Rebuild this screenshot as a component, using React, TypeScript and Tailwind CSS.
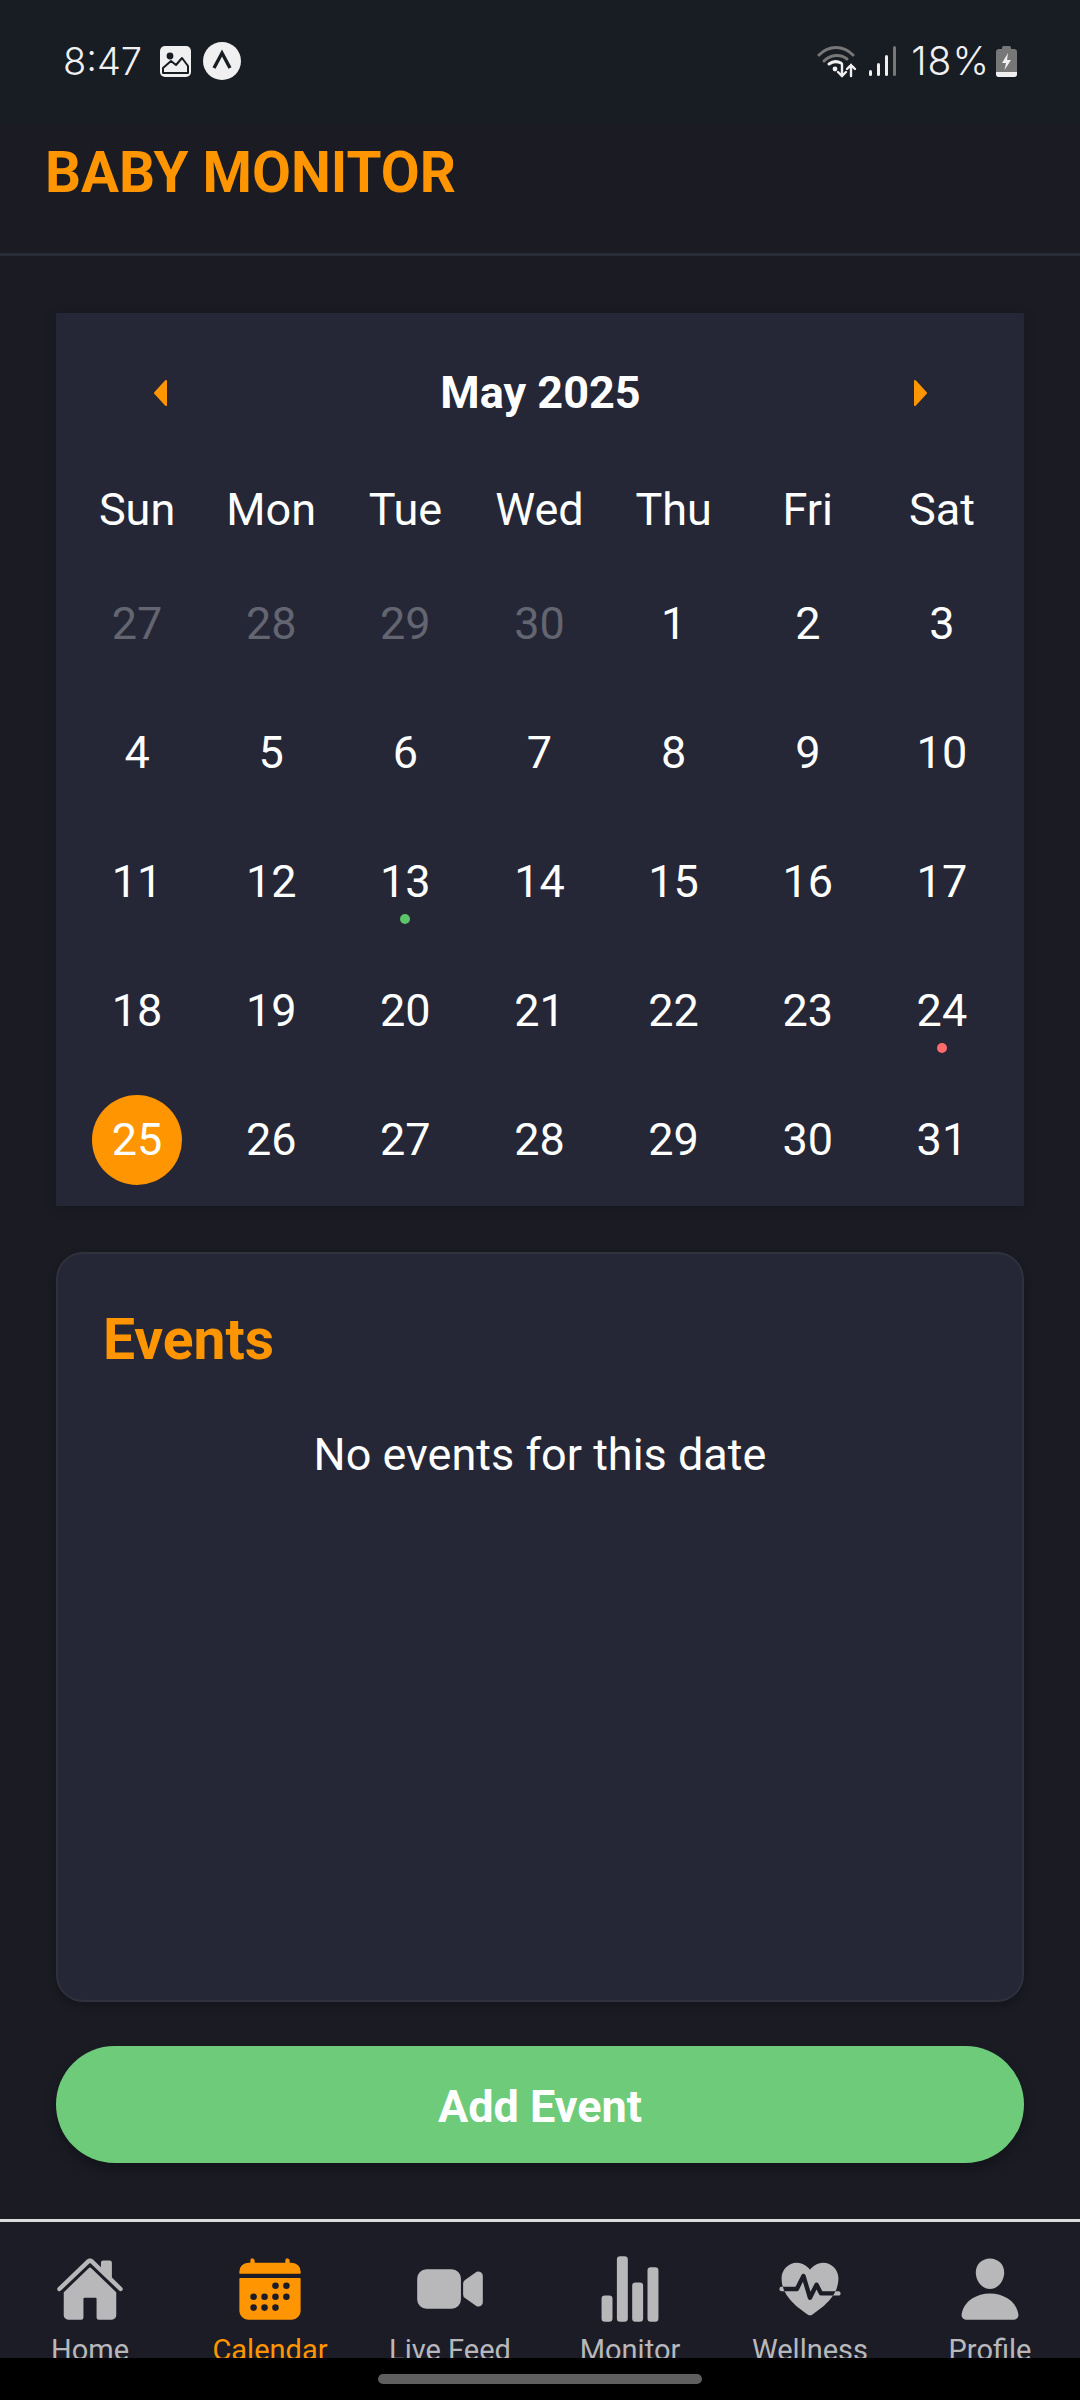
import { IoHome, IoCalendar, IoVideocam, IoStatsChart, IoFitness, IoPerson } from "react-icons/io5";

const weekDays = ["Sun", "Mon", "Tue", "Wed", "Thu", "Fri", "Sat"];

const days = [
  { n: 27, muted: true }, { n: 28, muted: true }, { n: 29, muted: true }, { n: 30, muted: true },
  ...Array.from({ length: 31 }, (_, i) => ({ n: i + 1, muted: false })),
];

function StatusBar() {
  return (
    <div className="flex h-[122px] items-start justify-between bg-[#181c23] pl-[63px] pr-[63px] pt-[42px] font-['Inter']">
      <div className="flex items-center">
        <span className="w-[97px] text-[38px] leading-[38px] font-light text-[#f0f0f0]">8:47</span>
        <svg viewBox="0 0 31 31" className="h-[31px] w-[31px]">
          <rect width="31" height="31" rx="5" fill="#f0f0f0" />
          <circle cx="10" cy="10" r="3.4" fill="#181c23" />
          <path d="M3 27 V22 L11 15 L16 19 L22 12 L28 20 V27 Z" fill="none" stroke="#181c23" strokeWidth="2" strokeLinejoin="round" />
        </svg>
        <svg viewBox="0 0 38 38" className="ml-[12px] h-[38px] w-[38px]">
          <circle cx="19" cy="19" r="19" fill="#f0f0f0" />
          <path d="M11 26 L19 11 L27 26" fill="none" stroke="#181c23" strokeWidth="3.4" />
        </svg>
      </div>
      <div className="flex items-center">
        <svg viewBox="0 0 40 34" className="h-[34px] w-[40px]" fill="none" strokeLinecap="round">
          <path d="M2 11 C12 1 26 1 36 11" stroke="#777" strokeWidth="3" />
          <path d="M7 17 C14 10 24 10 30 15" stroke="#777" strokeWidth="3" />
          <path d="M12 20 C16 17 20 17 24 19" stroke="#f0f0f0" strokeWidth="3" />
          <circle cx="18" cy="25" r="2.4" fill="#f0f0f0" />
          <path d="M25 20 V32 M21 28 L25 32 L29 28 M34 32 V21 M30 25 L34 21 L38 25" stroke="#f0f0f0" strokeWidth="2.4" />
        </svg>
        <svg viewBox="0 0 27 30" className="ml-[12px] h-[30px] w-[27px]">
          <rect x="0" y="24" width="3" height="6" rx="1.5" fill="#f0f0f0" />
          <rect x="8" y="17" width="3" height="13" rx="1.5" fill="#f0f0f0" />
          <rect x="16" y="9" width="3" height="21" rx="1.5" fill="#f0f0f0" />
          <rect x="24" y="0" width="3" height="30" rx="1.5" fill="#777" />
        </svg>
        <span className="ml-[15px] text-[39px] leading-[38px] font-light tracking-[1px] text-[#f0f0f0]">18%</span>
        <svg viewBox="0 0 21 31" className="ml-[6px] h-[31px] w-[21px]">
          <rect x="6" y="0" width="9" height="4" rx="1.5" fill="#777" />
          <rect x="0" y="3" width="21" height="28" rx="3" fill="#777" />
          <path d="M0 26 H21 V28 A3 3 0 0 1 18 31 H3 A3 3 0 0 1 0 28 Z" fill="#f0f0f0" />
          <path d="M12 7 L6 17 H10 L8.5 24 L15 14 H11 Z" fill="#f0f0f0" />
        </svg>
      </div>
    </div>
  );
}

function Calendar() {
  return (
    <div className="bg-[#252736] pb-[2px] pl-[14px] pr-[15px] pt-[40px] shadow-[0_2px_12px_rgba(0,0,0,0.15)]">
      <div className="flex h-[80px] items-center justify-between pl-[82px] pr-[80px]">
        <svg viewBox="0 0 16 30" className="h-[30px] w-[16px]">
          <path d="M14 3 L3 15 L14 27 Z" fill="#ff9500" stroke="#ff9500" strokeWidth="2" strokeLinejoin="round" />
        </svg>
        <span className="text-[45px] font-bold text-white">May 2025</span>
        <svg viewBox="0 0 16 30" className="h-[30px] w-[16px]">
          <path d="M2 3 L13 15 L2 27 Z" fill="#ff9500" stroke="#ff9500" strokeWidth="2" strokeLinejoin="round" />
        </svg>
      </div>
      <div className="mt-[43px] grid h-[60px] grid-cols-7 items-center text-center text-[45px] text-white">
        {weekDays.map((d) => (
          <span key={d}>{d}</span>
        ))}
      </div>
      <div className="mt-[23px] grid grid-cols-7">
        {days.map((d, i) => (
          <div key={i} className="relative flex h-[129px] items-center justify-center text-[45px]">
            {d.n === 25 && !d.muted ? (
              <span className="flex h-[90px] w-[90px] items-center justify-center rounded-full bg-[#ff9500] text-white">
                25
              </span>
            ) : (
              <span className={d.muted ? "text-[#636571]" : "text-white"}>{d.n}</span>
            )}
            {d.n === 13 && <span className="absolute left-1/2 top-[97px] h-[10px] w-[10px] -translate-x-1/2 rounded-full bg-[#5cc46a]" />}
            {d.n === 24 && !d.muted && <span className="absolute left-1/2 top-[97px] h-[10px] w-[10px] -translate-x-1/2 rounded-full bg-[#ff6b6b]" />}
          </div>
        ))}
      </div>
    </div>
  );
}

function Tab({ label, active, icon }: { label: string; active?: boolean; icon: React.ReactNode }) {
  return (
    <div className={`flex flex-col items-center ${active ? "text-[#ff9500]" : "text-[#b8b8bb]"}`}>
      <div className="flex h-[78px] items-center">{icon}</div>
      <span className="mt-[6px] text-[29px] leading-[33px] whitespace-nowrap">{label}</span>
    </div>
  );
}

export default function App() {
  return (
    <div
      className="flex h-[2400px] w-[1080px] flex-col overflow-hidden bg-[#1a1b23]"
      style={{ fontFamily: "Roboto, sans-serif" }}
    >
      <StatusBar />
      <header className="flex h-[134px] items-start border-b-[3px] border-[#2a2c35] px-[45px] pt-[18px]">
        <h1 className="text-[56.5px] leading-[66px] font-bold text-[#ff9500]">BABY MONITOR</h1>
      </header>

      <main className="flex-1 px-[56px] pt-[57px]">
        <Calendar />
        <section className="mt-[46px] h-[750px] rounded-[27px] border-2 border-[#2f313d] bg-[#252736] px-[45px] pt-[53px] shadow-[0_4px_10px_rgba(0,0,0,0.2)]">
          <h2 className="text-[57px] leading-[66px] font-bold text-[#ff9500]">Events</h2>
          <p className="mt-[52px] text-center text-[45px] leading-[60px] text-white">No events for this date</p>
        </section>
        <button className="mt-[44px] flex h-[117px] w-full items-center justify-center rounded-full bg-[#6dcb7a] pt-[5px] text-[45px] font-bold text-white shadow-[0_6px_12px_rgba(0,0,0,0.25)]">
          Add Event
        </button>
      </main>

      <nav className="grid h-[139px] grid-cols-6 overflow-hidden border-t-[3px] border-[#dcdcdc] bg-[#1b1c26] pt-[28px]">
        <Tab label="Home" icon={<IoHome size={70} />} />
        <Tab label="Calendar" active icon={<IoCalendar size={70} />} />
        <Tab label="Live Feed" icon={<IoVideocam size={70} />} />
        <Tab label="Monitor" icon={<IoStatsChart size={70} />} />
        <Tab label="Wellness" icon={<IoFitness size={70} />} />
        <Tab label="Profile" icon={<IoPerson size={70} />} />
      </nav>

      <div className="flex h-[42px] justify-center bg-black pt-[16px]">
        <div className="h-[10px] w-[324px] rounded-full bg-[#5f5f5f]" />
      </div>
    </div>
  );
}
